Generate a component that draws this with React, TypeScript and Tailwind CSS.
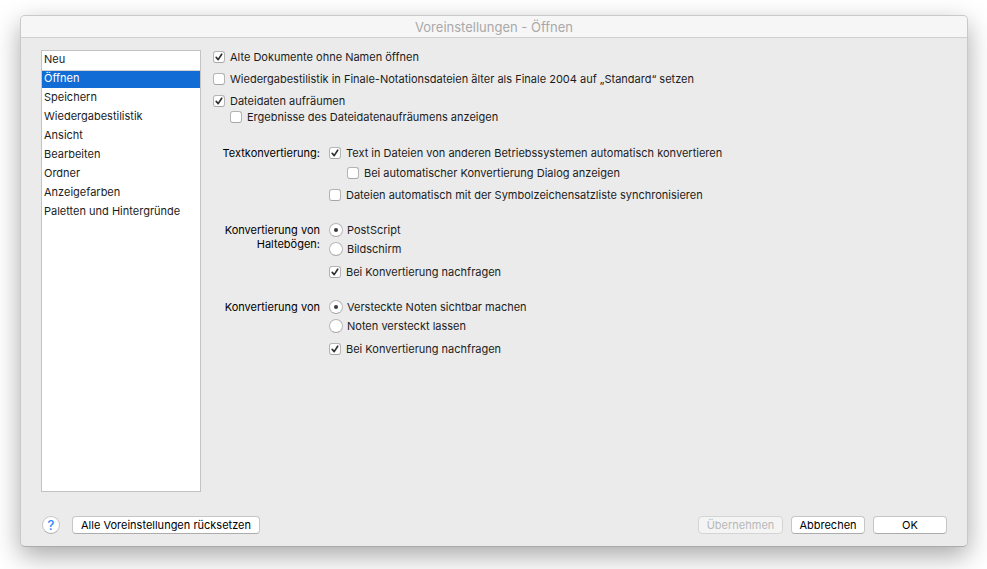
import { useState } from "react";
import type { ReactNode } from "react";

const categories = [
  "Neu",
  "Öffnen",
  "Speichern",
  "Wiedergabestilistik",
  "Ansicht",
  "Bearbeiten",
  "Ordner",
  "Anzeigefarben",
  "Paletten und Hintergründe",
];

function Check({ children, checked = false }: { children: ReactNode; checked?: boolean }) {
  return (
    <label className="flex items-center gap-[5px]">
      <span className="grid shrink-0">
        <input
          type="checkbox"
          defaultChecked={checked}
          className="peer col-start-1 row-start-1 size-3 appearance-none rounded-[3px] border border-[#b4b4b4] border-b-[#a6a6a6] bg-white"
        />
        <svg
          viewBox="0 0 12 12"
          className="pointer-events-none col-start-1 row-start-1 hidden size-3 peer-checked:block"
          fill="none"
          stroke="#333333"
          strokeWidth="1.7"
          strokeLinecap="round"
          strokeLinejoin="round"
          aria-hidden="true"
        >
          <path d="M3.2 6.4 5.2 8.6 8.7 3.2" />
        </svg>
      </span>
      <span>{children}</span>
    </label>
  );
}

function Radio({ children, name, checked = false }: { children: ReactNode; name: string; checked?: boolean }) {
  return (
    <label className="flex items-center gap-1">
      <span className="grid shrink-0 place-items-center">
        <input
          type="radio"
          name={name}
          defaultChecked={checked}
          className="peer col-start-1 row-start-1 size-3.5 appearance-none rounded-full border border-[#b8b8b8] border-b-[#a6a6a6] bg-white"
        />
        <span className="pointer-events-none col-start-1 row-start-1 hidden size-1 rounded-full bg-[#3a3a3a] peer-checked:block" />
      </span>
      <span>{children}</span>
    </label>
  );
}

function Group({ title, children }: { title: ReactNode; children: ReactNode }) {
  return (
    <fieldset className="flex gap-[9px]">
      <div className="w-[107px] shrink-0 text-right text-black">{title}</div>
      <div className="min-w-0 flex-1">{children}</div>
    </fieldset>
  );
}

const buttonStyle =
  "h-[18px] rounded-[4px] border border-[#c6c6c6] border-b-[#acacac] bg-white text-center leading-4 text-black";

export default function App() {
  const [selected, setSelected] = useState("Öffnen");

  return (
    <div className="flex min-h-screen bg-white pt-[15px] pr-[19px] pb-[22px] pl-5 font-['Inter','Liberation_Sans',sans-serif] text-[11px] leading-[14px] text-[#1c1c1c]">
      <main className="flex flex-1 flex-col overflow-hidden rounded-[5px] border border-[#c9c9c9] border-b-[#ababab] bg-[#ebebeb] shadow-[0_9px_26px_rgba(0,0,0,0.34)]">
        <header className="border-b border-[#d0d0d0] bg-[#f6f6f6]">
          <h1 className="text-center text-[13px] leading-[22px] text-[#a9a9a9] h-[21px]">Voreinstellungen - {selected}</h1>
        </header>

        <div className="flex flex-1 gap-3 px-5 pt-3">
          <nav className="w-40 shrink-0 border border-[#c3c3c3] bg-white">
            {categories.map((category) => (
              <button
                key={category}
                type="button"
                aria-pressed={category === selected}
                onClick={() => setSelected(category)}
                className={
                  category === selected
                    ? "block h-[19px] w-full border-t border-b border-t-[#d2d2d2] border-b-white bg-[#116cd6] pb-0.5 pl-0.5 text-left leading-[15px] text-white"
                    : "block h-[19px] w-full border-y border-white pb-0.5 pl-0.5 text-left leading-[15px]"
                }
              >
                {category}
              </button>
            ))}
          </nav>

          <section className="min-w-0 flex-1">
            <div className="flex flex-col gap-2">
              <Check checked>Alte Dokumente ohne Namen öffnen</Check>
              <Check>Wiedergabestilistik in Finale-Notationsdateien älter als Finale 2004 auf „Standard“ setzen</Check>
              <Check checked>Dateidaten aufräumen</Check>
            </div>
            <div className="mt-0.5 mb-[22px] pl-[17px]">
              <Check>Ergebnisse des Dateidatenaufräumens anzeigen</Check>
            </div>

            <div className="flex flex-col gap-[21px]">
              <Group title="Textkonvertierung:">
                <Check checked>Text in Dateien von anderen Betriebssystemen automatisch konvertieren</Check>
                <div className="mt-1.5 mb-2 pl-[18px]">
                  <Check>Bei automatischer Konvertierung Dialog anzeigen</Check>
                </div>
                <Check>Dateien automatisch mit der Symbolzeichensatzliste synchronisieren</Check>
              </Group>

              <Group title={<>Konvertierung von<br />Haltebögen:</>}>
                <div className="mb-[9px] flex flex-col gap-[5px]">
                  <Radio name="ties" checked>PostScript</Radio>
                  <Radio name="ties">Bildschirm</Radio>
                </div>
                <Check checked>Bei Konvertierung nachfragen</Check>
              </Group>

              <Group title="Konvertierung von">
                <div className="mb-[9px] flex flex-col gap-[5px]">
                  <Radio name="hidden-notes" checked>Versteckte Noten sichtbar machen</Radio>
                  <Radio name="hidden-notes">Noten versteckt lassen</Radio>
                </div>
                <Check checked>Bei Konvertierung nachfragen</Check>
              </Group>
            </div>
          </section>
        </div>

        <footer className="flex gap-2 px-5 pt-6 pb-3">
          <button
            type="button"
            aria-label="Hilfe"
            className="mr-1 ml-px size-[18px] rounded-full border border-[#c6c6c6] border-b-[#acacac] bg-white text-[13px] leading-4 font-medium text-[#2a8af6]"
          >
            ?
          </button>
          <button type="button" className={`${buttonStyle} w-[188px]`}>Alle Voreinstellungen rücksetzen</button>
          <button
            type="button"
            disabled
            className="ml-auto h-[18px] w-[85px] rounded-[4px] border border-[#d4d4d4] bg-[#f4f4f4] text-center leading-4 text-[#b8b8b8]"
          >
            Übernehmen
          </button>
          <button type="button" className={`${buttonStyle} w-[74px]`}>Abbrechen</button>
          <button type="button" className={`${buttonStyle} w-[74px]`}>OK</button>
        </footer>
      </main>
    </div>
  );
}
